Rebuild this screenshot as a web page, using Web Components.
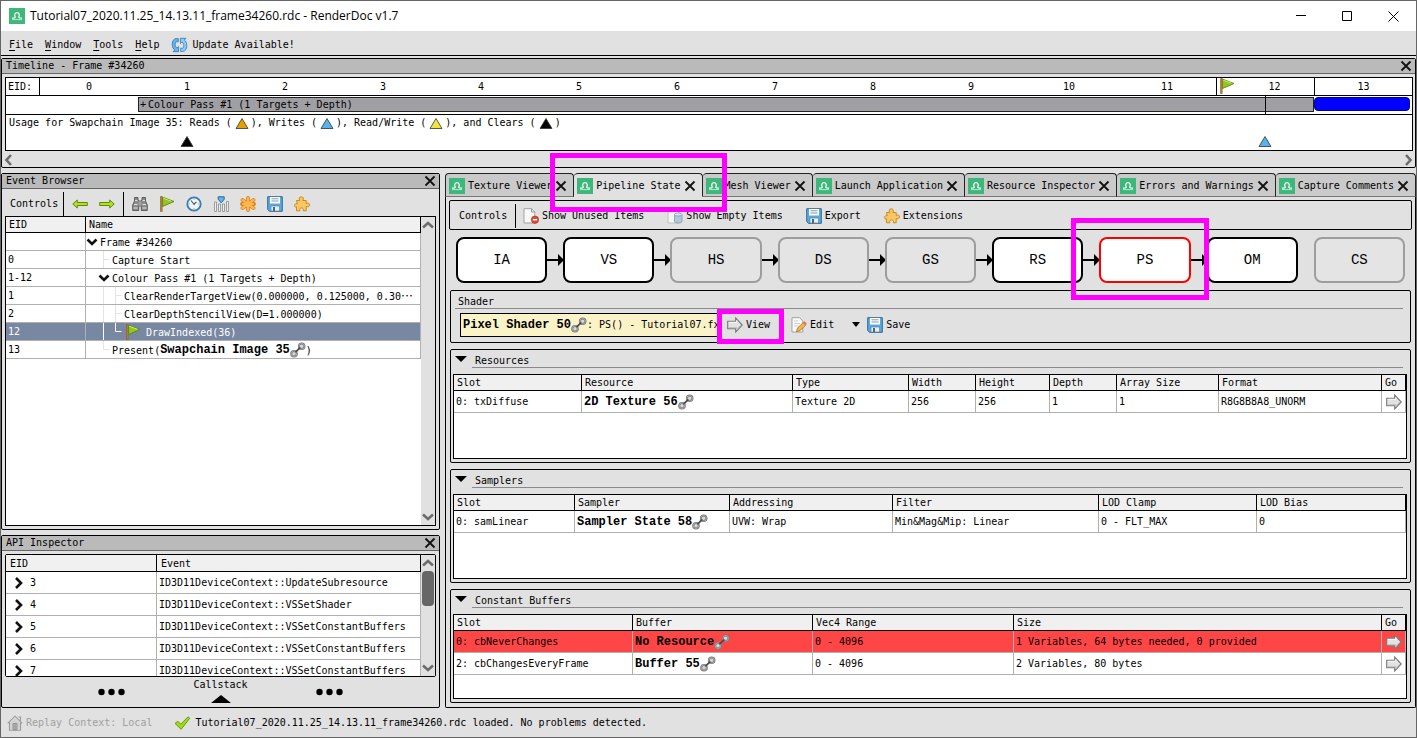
<!DOCTYPE html>
<html lang="en">
<head>
<meta charset="utf-8">
<title>Tutorial07_2020.11.25_14.13.11_frame34260.rdc - RenderDoc v1.7</title>
<style>
  body { margin: 0; color: #000; background: #e1e1e1; font: 10px/16px "DejaVu Sans Mono", monospace; }
</style>
</head>
<body>
<rd-app></rd-app>

<script>
const BASE = `<style>
  * { box-sizing: border-box; }
  :host { display: block; box-sizing: border-box; }
  button { appearance: none; border: 0; margin: 0; padding: 0; background: none; font: inherit; color: inherit; text-align: left; white-space: nowrap; display: inline-flex; align-items: center; gap: 3px; }
  a { color: inherit; text-decoration: none; }
  h2 { margin: 0; font: inherit; }
  .res { font: bold 12px/16px "Liberation Mono", monospace; display: inline-flex; align-items: center; vertical-align: top; }
</style>`;

/* Registers an element whose shadow root is cloned from a template. */
function component(name, html) {
  const tpl = document.createElement('template');
  tpl.innerHTML = BASE + html;
  customElements.define(name, class extends HTMLElement {
    constructor() {
      super();
      this.attachShadow({ mode: 'open' }).append(tpl.content.cloneNode(true));
    }
  });
}

const chainRing = (x, y) => `<circle cx="${x}" cy="${y}" r="2.800" fill="#d8d8d8" stroke="#777" stroke-width="2"/><circle cx="${x}" cy="${y}" r="2.800" fill="none" stroke="#b5b5b5" stroke-width=".7"/>`;
const ICONS = {
  app: '<path fill="#3db87a" d="M0 0h16v16H0z"/><path d="M3 10.200c1.800 0 3-.2 3.300-1C5 7 6 4.600 8 4.600S11 7 9.700 9.200c.3.800 1.500 1 3.300 1" fill="none" stroke="#fff" stroke-width="1.200"/><path d="M3 11.600h10" stroke="#c8ecd9" stroke-width=".9"/>',
  update: '<path d="M7.300 1.500H5.600C2.800 1.500 1.200 4 1.200 7.400c0 2.700 1 4.600 2.500 5.600L2 14.700h5.600V9.600L6 11C4.900 10.200 4.200 9 4.200 7.400c0-1.600.6-2.700 1.600-2.700h1.500z" fill="#66b2ea" stroke="#2f78b6" stroke-width=".8"/><path d="M9.700 14.500h1.700c2.800 0 4.400-2.500 4.400-5.900 0-2.700-1-4.600-2.500-5.600L15 1.300H9.400v5.100L11 5c1.100.8 1.800 2 1.800 3.600 0 1.600-.6 2.700-1.600 2.700H9.700z" fill="#8ccaf4" stroke="#2f78b6" stroke-width=".8"/>',
  close: '<path d="M3.500 3.500l9 9m0-9l-9 9" stroke="#111" stroke-width="1.800" fill="none"/>',
  back: '<path d="M.8 8l4.500-4v2.500h10v3h-10V12z" fill="#b5e021" stroke="#5c8a0c"/>',
  forward: '<path d="M15.200 8l-4.500-4v2.500h-10v3h10V12z" fill="#b5e021" stroke="#5c8a0c"/>',
  binoculars: '<path d="M2.500 1.500H6V4l1 1h2l1-1V1.500h3.500V5l1.800 4v5.500h-6V10H6.700v4.500h-6V9L2.500 5z" fill="#8c8c8c" stroke="#555" stroke-width=".9"/><path d="M3 4.500h2.500m5 0H13M2 8.500h3.500m5 0H14M1.500 12h4m5 0h4" stroke="#e0e0e0" fill="none"/><path d="M8 5v5" stroke="#bbb"/>',
  flag: '<path d="M1.500.5v15h1.700V.5z" fill="#b98142" stroke="#8c5a25" stroke-width=".6"/><path d="M3.600 1.200l11.400 4.300-11.400 5z" fill="#97c51c" stroke="#578a13" stroke-width=".9"/><path d="M4.200 2.200l8.200 3.100" stroke="#cdea77"/>',
  clock: '<circle cx="8" cy="8" r="6.700" fill="#eef5fa" stroke="#337cb5" stroke-width="1.800"/><path d="M5 4.500L8.500 9M8 8l2.500-2" stroke="#555" stroke-width="1.100"/><path d="M8 2.800v1M8 12v1M3 8h1m8 0h1" stroke="#e2ad29" stroke-width="1.200"/>',
  bars: '<path d="M1.500 6h2v9.500h-2zm4 2h2v7.500h-2zm4 0h2v7.500h-2zm4-2.500h2v10h-2z" fill="#eee" stroke="#8a8a8a" stroke-width=".8"/><path d="M5.200.800h6v2.400L8.200 6.800l-3-3.600z" fill="#65b4e8" stroke="#2269a5"/>',
  asterisk: '<path d="M8 2v12M2.500 4L13.500 12M2.500 12L13.500 4M2 8h12" stroke="#d9831c" stroke-width="3.800" stroke-linecap="round"/><path d="M8 2v12M2.500 4L13.500 12M2.500 12L13.500 4M3 8h10" stroke="#ffb652" stroke-width="2.200" stroke-linecap="round"/>',
  save: '<path d="M.7.700h14.600v14.600H2.500L.7 13.500z" fill="#59a9dc" stroke="#2a6a9c"/><path d="M3 1h10v6.500H3z" fill="#fff"/><path d="M4.500 2.800h7M4.500 5h7" stroke="#8297a5"/><path d="M4 10h8.500v5H4z" fill="#ececec" stroke="#5680a0" stroke-width=".6"/><path d="M6 11h2v4H6z" fill="#416b89"/>',
  puzzle: '<path d="M2.500 4.500h3.300C4.500 2.500 5.500.8 7.300.8s2.800 1.700 1.500 3.700h3.400v3c2-1.200 3.300-.2 3.300 1.400s-1.300 2.600-3.300 1.400v4.500H9.200c.9-2-.3-2.900-1.600-2.900s-2.500.9-1.600 2.900H2.500v-4C.8 11.500.6 10.300.6 9.200s1-1.900 2.700-1.400z" fill="#f9c865" stroke="#cc8b1e"/>',
  link: `${chainRing(4, 11.700)}${chainRing(11.700, 4.300)}<path d="M5.500 10.200l4.700-4.500" stroke="#4a4a4a" stroke-width="1.800"/>`,
  go: '<path d="M.7 4.300h8V1l6.600 7-6.600 7v-3.300h-8z" fill="#e2e2e2" stroke="#777" stroke-width="1.100"/><path d="M1.800 10.600h8v2l4-4.500" fill="none" stroke="#c0c0c0"/><path d="M1.800 5.400h8V3.300" fill="none" stroke="#f8f8f8"/>',
  down: '<path d="M2 5h12l-6 6z"/>',
  expand: '<path d="M3.500 5.500L8 10l4.500-4.500" fill="none" stroke="#111" stroke-width="2.600"/>',
  child: '<path d="M5 3l5 5-5 5" fill="none" stroke="#111" stroke-width="2.600"/>',
  up: '<path d="M3 10.500L8 6l5 4.500" fill="none" stroke="#6c6c6c" stroke-width="2.600"/>',
  dn: '<path d="M3 5.500L8 10l5-4.500" fill="none" stroke="#6c6c6c" stroke-width="2.600"/>',
  left: '<path d="M10 3L5.500 8l4.500 5" fill="none" stroke="#6c6c6c" stroke-width="2.600"/>',
  right: '<path d="M6 3l4.500 5L6 13" fill="none" stroke="#6c6c6c" stroke-width="2.600"/>',
  unused: '<path d="M1 .7h7.500l3.300 3.300v11H1z" fill="#fafafa" stroke="#999" stroke-width=".9"/><path d="M8.500.7V4h3.300" fill="none" stroke="#999"/><circle cx="12" cy="11.700" r="3.700" fill="#df4a2e" stroke="#a92c1c" stroke-width=".6"/><path d="M9.800 11.700h4.400" stroke="#fff" stroke-width="1.500"/>',
  empty: '<path d="M1 .7h7.500l3.300 3.300v11H1z" fill="#f4f4f4" stroke="#bbb" stroke-width=".9"/><path d="M7.500 6.500v7c0 2 7.500 2 7.500 0v-7z" fill="#b4c6d8" stroke="#8097ad" stroke-width=".8"/><ellipse cx="11.200" cy="6.500" rx="3.700" ry="1.500" fill="#dce8f2" stroke="#8097ad" stroke-width=".8"/>',
  edit: '<path d="M1 .7h7.500l3.300 3.300v11H1z" fill="#fafafa" stroke="#999" stroke-width=".9"/><path d="M3 4h4M3 6.500h6M3 9h5" stroke="#ccc"/><path d="M5.500 14.700l1-3.500 5.700-5.700 2.500 2.500L9 13.700z" fill="#f5b743" stroke="#a86b1c" stroke-width=".8"/><path d="M12.200 5.500l1.300-1.200 2.300 2.400L14.700 8z" fill="#df6677"/>',
  home: '<path d="M.8 8.300L8 1.200l7.200 7.100M11.500 2h2v3.700M2.500 7.500v7.800h11V7.500" fill="none" stroke="#999" stroke-width="1.100"/><path d="M3 8l5-5 5 5v7H3z" fill="#d2d2d2"/><path d="M6 15V8.500h4V15zM8 8.500V15" fill="#bbb" stroke="#8e8e8e" stroke-width=".9"/>',
  check: '<path d="M1 8.500l2.800-2.300 3 3L14 1.800l1.700 1.500-8.500 11z" fill="#a5d90f" stroke="#5d9310" stroke-width=".9"/>',
  triangle: '<path d="M2 13.500L8 3.500l6 10z" fill="currentColor" stroke="#333" stroke-width=".8"/>',
  dots: '<circle cx="3.500" cy="8" r="3.200"/><circle cx="13.500" cy="8" r="3.200"/><circle cx="23.500" cy="8" r="3.200"/>',
  wedge: '<path d="M0 12h20L10 4z"/>'
};
customElements.define('rd-icon', class extends HTMLElement {
  constructor() { super(); this.attachShadow({ mode: 'open' }); }
  connectedCallback() {
    const w = this.getAttribute('w') || 16;
    this.shadowRoot.innerHTML = `<style>:host{display:inline-block;flex:none;width:${w}px;height:16px;vertical-align:top}svg{display:block}</style><svg width="${w}" height="16" viewBox="0 0 ${w} 16" aria-hidden="true">${ICONS[this.getAttribute('name')]}</svg>`;
  }
});

/* Magenta call-out drawn over the control that is its parent. */
component('rd-callout', `<style>
  :host { position: absolute; border: 5px solid #f0f; z-index: 5; pointer-events: none; }
</style>`);

component('rd-title-bar', `<style>
  :host { display: flex; align-items: center; height: 30px; background: #fff; padding-left: 8px; font: 12px/16px "Open Sans", sans-serif; }
  span { margin: 0 auto 0 5px; white-space: nowrap; }
  button { width: 46px; height: 28px; justify-content: center; }
</style>
<rd-icon name="app"></rd-icon><span>Tutorial07_2020.11.25_14.13.11_frame34260.rdc - RenderDoc v1.7</span>
<button aria-label="Minimize"><svg width="10" height="10"><path d="M0 4.500h10" stroke="#000"/></svg></button>
<button aria-label="Maximize"><svg width="10" height="10"><path d="M.5.500h9v9h-9z" stroke="#000" fill="none"/></svg></button>
<button aria-label="Close"><svg width="11" height="11"><path d="M.5.500l10 10m0-10l-10 10" stroke="#000"/></svg></button>`);

component('rd-menu-bar', `<style>
  :host { display: flex; align-items: center; height: 25px; padding: 4px 8px 0; gap: 12px; border-bottom: 1px solid #000; }
  u { text-underline-offset: 2px; }
  .n { gap: 0; }
</style>
<button class="n"><u>F</u>ile</button><button class="n"><u>W</u>indow</button><button class="n"><u>T</u>ools</button><button class="n"><u>H</u>elp</button>
<button><rd-icon name="update" w="18"></rd-icon>Update Available!</button>`);

component('rd-dock', `<style>
  :host { display: flex; flex-direction: column; border: 1px solid #000; border-radius: 2px; }
  header { display: flex; align-items: center; justify-content: space-between; height: 15px; padding: 0 1px 0 4px; background: #bababa; border-bottom: 1px solid #666; }
</style>
<header><h2><slot name="title"></slot></h2><button aria-label="Close panel"><rd-icon name="close"></rd-icon></button></header>
<slot></slot>`);

component('rd-timeline', `<style>
  :host { padding: 3px 2px 0 3px; }
  .box { background: #fff; border: 1px solid #000; }
  .row { display: grid; grid-template-columns: 34px repeat(14, 1fr); border-bottom: 1px solid #000; height: 19px; }
  .ids { height: 18px; line-height: 18px; text-align: center; }
  .ids > :first-child { border-right: 1px solid #000; text-align: left; padding-left: 2px; }
  .mark { border-left: 1px solid #000; }
  .cur { display: flex; padding-left: 2px; }
  .cur i { flex: 1; font-style: normal; }
  .pass { grid-column: 3 / 15; height: 15px; margin-top: 1px; padding-left: 1px; line-height: 13px; background: #a09fa4; border: 1px solid #222; text-align: left; justify-content: flex-start; gap: 2px; grid-row: 1; }
  .needle { grid-column: 14; grid-row: 1; justify-self: center; width: 1px; height: 18px; background: #000; }
  .draw { grid-column: 15; grid-row: 1; height: 14px; margin: 1px 2px 0 0; background: #00f; border: 1px solid #0000a0; border-radius: 4px; }
  .use { height: 16px; padding-left: 3px; white-space: pre; line-height: 15px; display: flex; }
  .use rd-icon { margin: 0 1px 0 2px; }
  .hits { height: 19px; border: 0; justify-items: center; padding-top: 2px; }
  .scroll { display: flex; justify-content: space-between; height: 16px; align-items: center; margin: 0 -3px 0 -4px; padding-top: 1px; }
</style>
<div class="box">
  <div class="row ids"><span>EID:</span><span>0</span><span>1</span><span>2</span><span>3</span><span>4</span><span>5</span><span>6</span><span>7</span><span>8</span><span>9</span><span>10</span><span>11</span><span class="mark cur"><rd-icon name="flag"></rd-icon><i>12</i></span><span class="mark">13</span></div>
  <div class="row"><button class="pass"><span>+</span><span>Colour Pass #1 (1 Targets + Depth)</span></button><span class="needle"></span><span class="draw"></span></div>
  <div class="use"><span>Usage for Swapchain Image 35: Reads (</span><rd-icon name="triangle" style="color:#e69f00"></rd-icon><span>), Writes (</span><rd-icon name="triangle" style="color:#56b4e9"></rd-icon><span>), Read/Write (</span><rd-icon name="triangle" style="color:#f0e442"></rd-icon><span>), and Clears (</span><rd-icon name="triangle"></rd-icon><span>)</span></div>
  <div class="row hits"><rd-icon name="triangle" style="grid-column:3"></rd-icon><rd-icon name="triangle" style="grid-column:14;color:#56b4e9"></rd-icon></div>
</div>
<div class="scroll"><button aria-label="Scroll left"><rd-icon name="left"></rd-icon></button><button aria-label="Scroll right"><rd-icon name="right"></rd-icon></button></div>`);

/* Table element: columns are [label, width or null], rows are arrays of cell markup. */
class GridTable extends HTMLElement {
  constructor() { super(); this.attachShadow({ mode: 'open' }); }
  connectedCallback() {
    const { cols, rows, css = '', rowClass = [] } = this.constructor;
    this.shadowRoot.innerHTML = BASE + `<style>
      :host { overflow: hidden; background: #fff; }
      table { width: 100%; table-layout: fixed; border-collapse: separate; border-spacing: 0; }
      th { height: 16px; padding: 0 0 0 3px; font-weight: normal; text-align: left; line-height: 15px; background: #f0f0f0; border: solid #000; border-width: 0 1px 1px 0; }
      td { height: 22px; padding: 1px 0 0 2px; border: solid #b0b0b0; border-width: 0 1px 1px 0; white-space: nowrap; overflow: hidden; line-height: 16px; }
      td:has(.go) { padding: 0; text-align: center; } td .go { vertical-align: top; }
      .error td { background: #ff4646; }
      ${css}</style>
      <table><colgroup>${cols.map(c => `<col${c[1] ? ` style="width:${c[1]}px"` : ''}>`).join('')}</colgroup>
      <thead><tr>${cols.map(c => `<th scope="col">${c[0]}</th>`).join('')}</tr></thead>
      <tbody>${rows.map((r, i) => `<tr class="${rowClass[i] || ''}">${r.map(c => `<td>${c}</td>`).join('')}</tr>`).join('')}</tbody></table>`;
  }
}
const res = t => `<a class="res" href="#">${t}<rd-icon name="link"></rd-icon></a>`;
const go = '<button class="go" aria-label="Go"><rd-icon name="go"></rd-icon></button>';
const guide = (w, d) => `<svg class="g" width="${w}" height="17" aria-hidden="true"><path d="${d}"/></svg>`;

customElements.define('rd-event-table', class extends GridTable {
  static cols = [['EID', 80], ['Name', null]];
  static rowClass = ['', '', '', '', '', 'sel', ''];
  static css = `
    td { height: 18px; } td:last-child { padding: 0; line-height: 17px; }
    td > div { display: flex; align-items: center; height: 17px; }
    td > div > span { padding-top: 1px; }
    .g { flex: none; } .g path { stroke: #e4e4e4; fill: none; }
    .sel td { background: #7888a2; color: #fff; } .sel .g path { stroke: #fff; }
    .exp { width: 12px; margin-right: 2px; overflow: hidden; justify-content: center; } .l1 { padding-left: 12px; }
    .dots { font: 12px/16px "Noto Sans CJK SC", sans-serif; }
    .sel rd-icon { margin: 0 5px 0 1px; }`;
  static rows = [
    ['', '<div><button class="exp" aria-label="Collapse"><rd-icon name="expand"></rd-icon></button><span>Frame #34260</span></div>'],
    ['0', `<div>${guide(26, 'M17.5 0v17M17.5 8.500h6')}<span>Capture Start</span></div>`],
    ['1-12', '<div class="l1"><button class="exp" aria-label="Collapse"><rd-icon name="expand"></rd-icon></button><span>Colour Pass #1 (1 Targets + Depth)</span></div>'],
    ['1', `<div>${guide(38, 'M17.5 0v17M29.500 0v17M29.500 8.500h6')}<span>ClearRenderTargetView(0.000000, 0.125000, 0.30</span><span class="dots">⋯</span></div>`],
    ['2', `<div>${guide(38, 'M17.5 0v17M29.500 0v17M29.500 8.500h6')}<span>ClearDepthStencilView(D=1.000000)</span></div>`],
    ['12', `<div>${guide(38, 'M17.5 0v17M29.500 0v8.500h6')}<rd-icon name="flag"></rd-icon><span>DrawIndexed(36)</span></div>`],
    ['13', `<div>${guide(26, 'M17.5 0v8.500h6')}<span>Present(</span>${res('Swapchain Image 35')}<span>)</span></div>`]
  ];
});
customElements.define('rd-api-table', class extends GridTable {
  static cols = [['EID', 151], ['Event', null]];
  static css = 'th { height: 17px; padding: 1px 0 0 4px; } td:first-child { padding-left: 5px; } td button { vertical-align: top; margin-right: 3px; }';
  static rows = [['3', 'UpdateSubresource'], ['4', 'VSSetShader'], ['5', 'VSSetConstantBuffers'], ['6', 'VSSetConstantBuffers'], ['7', 'VSSetConstantBuffers']]
    .map(([id, fn]) => [`<button aria-label="Expand"><rd-icon name="child"></rd-icon></button>${id}`, `ID3D11DeviceContext::${fn}`]);
});
customElements.define('rd-resource-table', class extends GridTable {
  static cols = [['Slot', 128], ['Resource', 211], ['Type', 116], ['Width', 67], ['Height', 74], ['Depth', 67], ['Array Size', 102], ['Format', null], ['Go', 24]];
  static rows = [['0: txDiffuse', res('2D Texture 56'), 'Texture 2D', '256', '256', '1', '1', 'R8G8B8A8_UNORM', go]];
});
customElements.define('rd-sampler-table', class extends GridTable {
  static cols = [['Slot', 121], ['Sampler', 155], ['Addressing', 163], ['Filter', 206], ['LOD Clamp', 158], ['LOD Bias', null]];
  static rows = [['0: samLinear', res('Sampler State 58'), 'UVW: Wrap', 'Min&amp;Mag&amp;Mip: Linear', '0 - FLT_MAX', '0']];
});
customElements.define('rd-buffer-table', class extends GridTable {
  static cols = [['Slot', 179], ['Buffer', 180], ['Vec4 Range', 201], ['Size', null], ['Go', 24]];
  static rowClass = ['error', ''];
  static rows = [
    ['0: cbNeverChanges', res('No Resource'), '0 - 4096', '1 Variables, 64 bytes needed, 0 provided', go],
    ['2: cbChangesEveryFrame', res('Buffer 55'), '0 - 4096', '2 Variables, 80 bytes', go]
  ];
});

component('rd-scrollbar', `<style>
  :host { display: flex; flex-direction: column; align-items: center; justify-content: space-between; width: 14px; flex: none; background: #e1e1e1; }
  button { width: 14px; justify-content: center; }
  .thumb { width: 12px; height: 35px; border-radius: 4px; background: #666; margin-bottom: auto; display: none; }
  :host([thumb]) .thumb { display: block; }
</style>
<button aria-label="Scroll up"><rd-icon name="up"></rd-icon></button><span class="thumb"></span><button aria-label="Scroll down"><rd-icon name="dn"></rd-icon></button>`);

component('rd-event-browser', `<style>
  :host { display: flex; flex-direction: column; flex: 1; padding: 0 3px 3px; }
  .tools { display: flex; align-items: center; height: 27px; padding: 2px 0 0 5px; }
  .tools button { margin-right: 11px; }
  .tools .sep { width: 1px; height: 24px; margin: 0 8px 0 5px; background: #000; }
  .tools .fwd { margin-right: 3px; }
  .list { display: flex; flex: 1; border: 1px solid #000; }
  rd-event-table { flex: 1; }
</style>
<div class="tools"><span>Controls</span><span class="sep"></span>
  <button aria-label="Previous"><rd-icon name="back"></rd-icon></button><button class="fwd" aria-label="Next"><rd-icon name="forward"></rd-icon></button><span class="sep"></span>
  <button aria-label="Find"><rd-icon name="binoculars"></rd-icon></button><button aria-label="Bookmark"><rd-icon name="flag"></rd-icon></button><button aria-label="Time draws"><rd-icon name="clock"></rd-icon></button><button aria-label="Columns"><rd-icon name="bars"></rd-icon></button><button aria-label="Filter"><rd-icon name="asterisk"></rd-icon></button><button aria-label="Export"><rd-icon name="save"></rd-icon></button><button aria-label="Extensions"><rd-icon name="puzzle"></rd-icon></button></div>
<div class="list"><rd-event-table></rd-event-table><rd-scrollbar></rd-scrollbar></div>`);

component('rd-api-inspector', `<style>
  :host { padding: 3px 3px 0; }
  .list { display: flex; height: 123px; border: 1px solid #000; border-radius: 2px; }
  rd-api-table { flex: 1; }
  .split { justify-content: center; gap: 68px; height: 30px; width: 100%; }
  .mid { display: flex; flex-direction: column; align-items: center; line-height: 13px; }
</style>
<div class="list"><rd-api-table></rd-api-table><rd-scrollbar thumb></rd-scrollbar></div>
<button class="split"><rd-icon name="dots" w="27"></rd-icon><span class="mid"><span>Callstack</span><rd-icon name="wedge" w="20"></rd-icon></span><rd-icon name="dots" w="27"></rd-icon></button>`);

component('rd-tab', `<style>
  :host { position: relative; flex: 1 1 auto; height: 24px; border: solid #222; border-width: 1px 1px 1px 0; border-bottom-color: #777; border-radius: 4px 4px 0 0; background: #cacaca; }
  :host([selected]) { background: #e1e1e1; border-bottom-color: #e1e1e1; }
  :host(:first-child) { border-left-width: 1px; }
  div { display: flex; align-items: center; height: 22px; padding: 1px 4px 0 3px; }
  .x { margin-left: auto; }
</style>
<div><button role="tab"><rd-icon name="app"></rd-icon><slot></slot></button><button class="x" aria-label="Close tab"><rd-icon name="close"></rd-icon></button></div><slot name="over"></slot>`);

component('rd-stage', `<style>
  :host { position: relative; flex: 1; }
  button { width: 100%; height: 46px; justify-content: center; background: #fff; border: 2px solid #000; border-radius: 8px; font: 14px/16px "Liberation Mono", monospace; }
  :host([off]) button { background: #e4e4e4; border-color: #9d9d9d; }
  :host([current]) button { border-color: #f00; }
  svg { position: absolute; left: 100%; top: 16px; display: none; }
  :host([flows]) svg { display: block; }
</style>
<button><slot></slot></button><svg width="18" height="14" aria-hidden="true"><path d="M0 7h12" stroke="#000" stroke-width="2"/><path d="M11 1l6 6-6 6z"/></svg><slot name="over"></slot>`);

component('rd-group', `<style>
  :host { display: flex; flex-direction: column; border: 1px solid #000; border-radius: 2px; padding: 0 3px 3px 2px; }
  header { display: flex; height: 18px; padding-right: 4px; line-height: 21px; }
  header button { width: 16px; margin-right: 3px; justify-content: center; }
  h2 { flex: 1; border-bottom: 1px solid #8a8a8a; padding-left: 3px; }
  .body { display: flex; flex-direction: column; flex: 1; margin-top: 6px; border: 1px solid #000; background: #fff; }
</style>
<header><button aria-label="Collapse"><rd-icon name="down"></rd-icon></button><h2><slot name="title"></slot></h2></header>
<div class="body"><slot></slot></div>`);

component('rd-shader-group', `<style>
  :host { border: 1px solid #000; border-radius: 2px; padding: 0 7px 5px 9px; }
  h2 { height: 18px; margin-left: -5px; padding-left: 3px; line-height: 21px; border-bottom: 1px solid #8a8a8a; }
  .line { display: flex; align-items: center; margin-top: 4px; }
  .field { width: 262px; height: 24px; padding: 3px 0 0 2px; background: #faf3c8; border: 1px solid #000; white-space: nowrap; overflow: hidden; }
  .line > button { position: relative; margin-left: 5px; }
  .line > .edit { margin-left: 21px; }
  .line > .drop { margin-left: 14px; }
  .line > .save { margin-left: 3px; }
  rd-callout { inset: -8px -14px -11px -10px; }
</style>
<h2>Shader</h2>
<div class="line"><div class="field"><a class="res" href="#">Pixel Shader 50<rd-icon name="link"></rd-icon></a>: PS() - Tutorial07.fx</div>
<button><rd-icon name="go"></rd-icon>View<rd-callout></rd-callout></button>
<button class="edit"><rd-icon name="edit"></rd-icon>Edit</button>
<button class="drop" aria-label="Edit options"><svg width="16" height="16"><path d="M4 5h8l-4 5z"/></svg></button>
<button class="save"><rd-icon name="save"></rd-icon>Save</button></div>`);

component('rd-pipeline-view', `<style>
  :host { display: flex; flex-direction: column; }
  .tabs { display: flex; }
  .pane { display: flex; flex-direction: column; flex: 1; border: solid #000; border-width: 0 1px 1px; border-radius: 0 0 2px 2px; padding: 3px 3px 4px; }
  .tools { display: flex; align-items: center; gap: 23px; height: 30px; padding: 1px 0 0 9px; border: 1px solid #000; border-radius: 2px; }
  .label { display: flex; align-items: center; height: 24px; width: 57px; margin-right: -16px; border-right: 1px solid #000; }
  .stages { display: flex; gap: 16px; padding: 7px 7px; }
  .groups { display: flex; flex-direction: column; flex: 1; gap: 6px; padding: 0 1px; }
  rd-group { flex: 1; min-height: 114px; }
  .tab-mark { inset: -21px -25px -16px -24px; }
  .stage-mark { inset: -19px -18px -17px -28px; }
</style>
<div class="tabs" role="tablist"><rd-tab>Texture Viewer</rd-tab><rd-tab selected>Pipeline State<rd-callout slot="over" class="tab-mark"></rd-callout></rd-tab><rd-tab>Mesh Viewer</rd-tab><rd-tab>Launch Application</rd-tab><rd-tab>Resource Inspector</rd-tab><rd-tab>Errors and Warnings</rd-tab><rd-tab>Capture Comments</rd-tab></div>
<div class="pane">
  <div class="tools"><span class="label">Controls</span><button><rd-icon name="unused"></rd-icon>Show Unused Items</button><button><rd-icon name="empty"></rd-icon>Show Empty Items</button><button><rd-icon name="save"></rd-icon>Export</button><button><rd-icon name="puzzle"></rd-icon>Extensions</button></div>
  <div class="stages"><rd-stage flows>IA</rd-stage><rd-stage flows>VS</rd-stage><rd-stage off flows>HS</rd-stage><rd-stage off flows>DS</rd-stage><rd-stage off flows>GS</rd-stage><rd-stage flows>RS</rd-stage><rd-stage current flows>PS<rd-callout slot="over" class="stage-mark"></rd-callout></rd-stage><rd-stage>OM</rd-stage><rd-stage off>CS</rd-stage></div>
  <div class="groups">
    <rd-shader-group></rd-shader-group>
    <rd-group><span slot="title">Resources</span><rd-resource-table></rd-resource-table></rd-group>
    <rd-group><span slot="title">Samplers</span><rd-sampler-table></rd-sampler-table></rd-group>
    <rd-group><span slot="title">Constant Buffers</span><rd-buffer-table></rd-buffer-table></rd-group>
  </div>
</div>`);

component('rd-status-bar', `<style>
  :host { display: flex; align-items: center; height: 29px; padding: 1px 0 0 6px; white-space: nowrap; }
  .ctx { color: #a0a0a0; margin-right: 22px; }
  span { display: flex; align-items: center; gap: 5px; }
</style>
<button class="ctx"><rd-icon name="home"></rd-icon>Replay Context: Local</button><span><rd-icon name="check"></rd-icon>Tutorial07_2020.11.25_14.13.11_frame34260.rdc loaded. No problems detected.</span>`);

component('rd-app', `<style>
  :host { display: flex; flex-direction: column; min-height: 100vh; border: 1px solid #666; background: #e1e1e1; }
  .work { display: grid; grid-template-columns: minmax(0, 439px) minmax(0, 1fr); gap: 5px; flex: 1; margin-top: 5px; }
  .side { display: flex; flex-direction: column; gap: 5px; }
  .grow { flex: 1; }
  .top { margin-top: 2px; }
</style>
<rd-title-bar></rd-title-bar>
<rd-menu-bar></rd-menu-bar>
<rd-dock class="top"><span slot="title">Timeline - Frame #34260</span><rd-timeline></rd-timeline></rd-dock>
<main class="work">
  <div class="side">
    <rd-dock class="grow"><span slot="title">Event Browser</span><rd-event-browser></rd-event-browser></rd-dock>
    <rd-dock><span slot="title">API Inspector</span><rd-api-inspector></rd-api-inspector></rd-dock>
  </div>
  <rd-pipeline-view></rd-pipeline-view>
</main>
<rd-status-bar></rd-status-bar>`);
</script>
</body>
</html>
